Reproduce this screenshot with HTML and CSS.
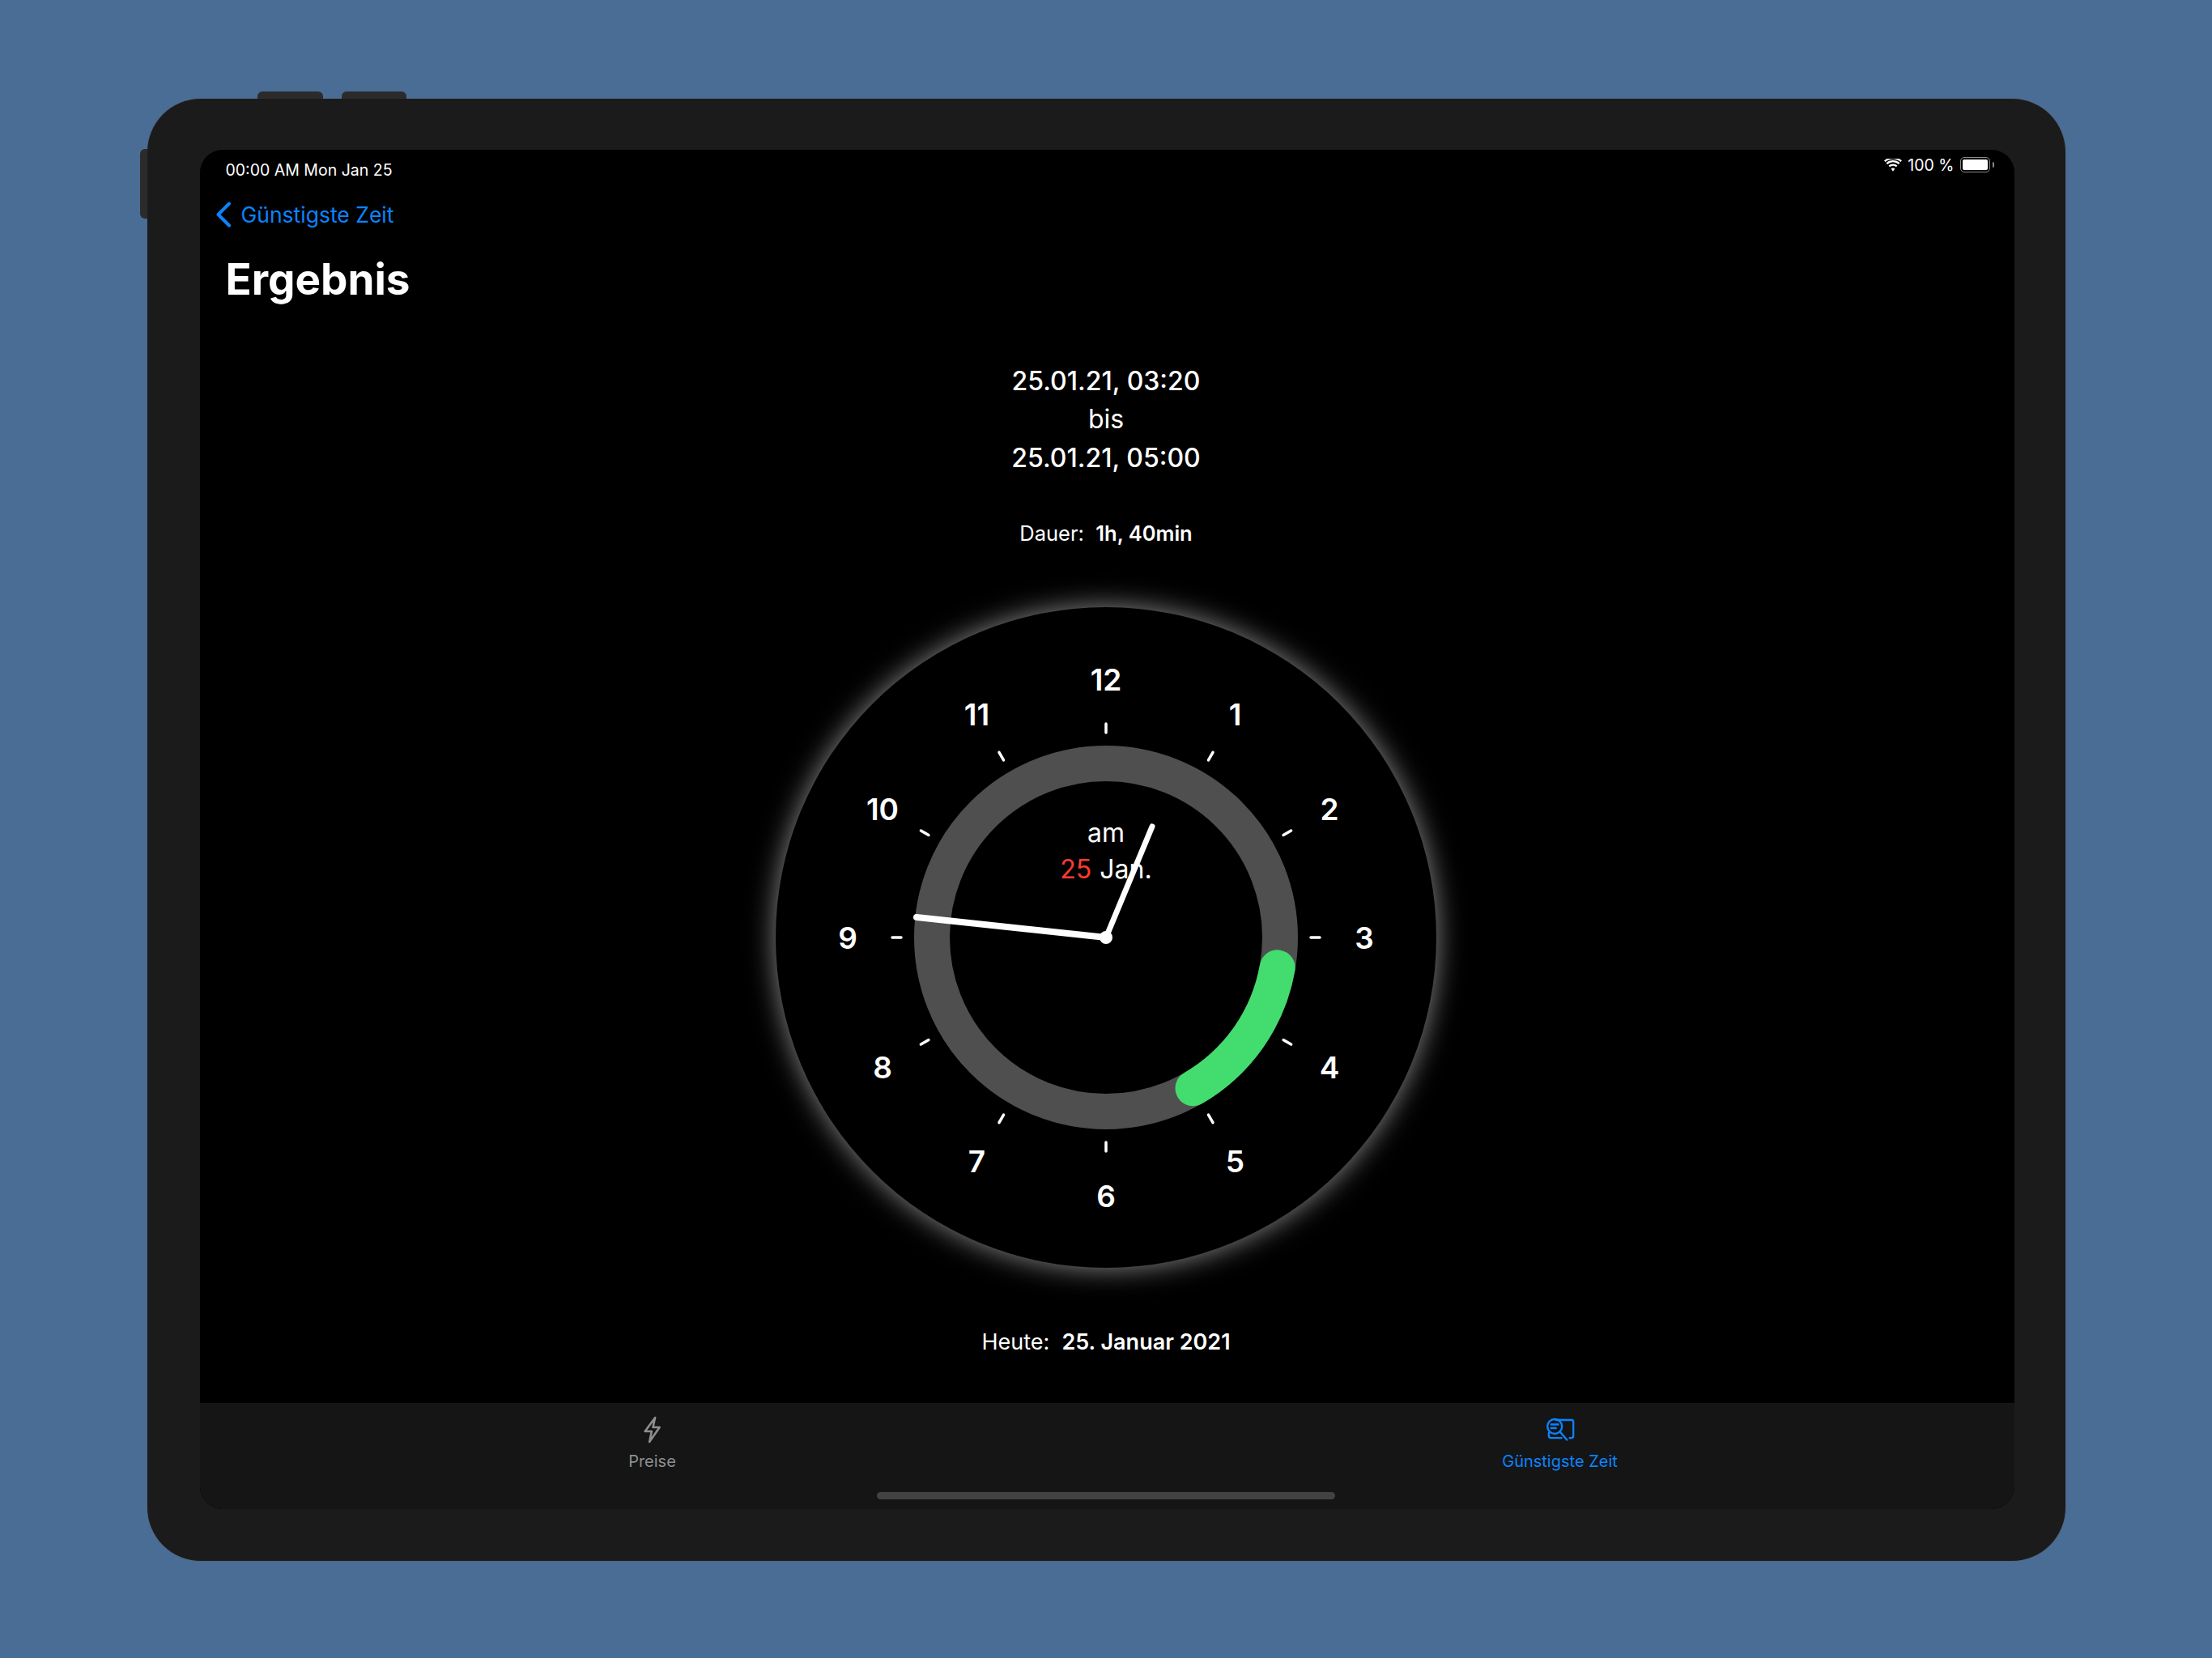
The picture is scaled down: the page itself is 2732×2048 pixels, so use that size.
FILE: index.html
```html
<!DOCTYPE html>
<html lang="de">
<head>
    <meta charset="UTF-8">
    <meta name="viewport" content="width=device-width, initial-scale=1.0">
    <title>Ergebnis</title>
    <link rel="stylesheet" href="styles.css">
</head>
<body>
    <div class="device">
        <div class="hw-btn hw-top-a"></div>
        <div class="hw-btn hw-top-b"></div>
        <div class="hw-btn hw-side"></div>

        <div class="screen">
            <div class="status-bar">
                <span>00:00 AM Mon Jan 25</span>
                <div class="status-right">
                    <svg class="wifi" width="22" height="16" viewBox="0 0 22 16">
                        <path d="M11 11.400a3 3 0 0 1 2.300 1.100L11 15.800l-2.300-3.300A3 3 0 0 1 11 11.400z" fill="#fff"/>
                        <path d="M6.300 9.400a7 7 0 0 1 9.400 0M3.300 6.100a11.300 11.300 0 0 1 15.400 0M.8 3.300a15.200 15.200 0 0 1 20.400 0" fill="none" stroke="#fff" stroke-width="2.200"/>
                    </svg>
                    <span>100 %</span>
                    <div class="battery"><div class="battery-fill"></div></div>
                </div>
            </div>

            <a class="back-link">
                <svg width="20" height="32" viewBox="0 0 20 32">
                    <path d="M17 2.500 3.500 16 17 29.500" fill="none" stroke="#0a84ff" stroke-width="4" stroke-linecap="round" stroke-linejoin="round"/>
                </svg>
                <span>Günstigste Zeit</span>
            </a>

            <h1 class="title">Ergebnis</h1>

            <div class="content">
                <div class="range">
                    <div class="range-date">25.01.21, 03:20</div>
                    <div class="range-bis">bis</div>
                    <div class="range-date">25.01.21, 05:00</div>
                </div>
                <div class="info-line dauer">Dauer:&nbsp; <b>1h, 40min</b></div>

                <div class="clock-face">
                    <svg class="clock" width="816" height="816" viewBox="-408 -408 816 816">
                        <circle r="215" fill="none" stroke="#4f4f4f" stroke-width="44"/>
                        <!-- 03:20 bis 05:00, 100deg bis 150deg -->
                        <path d="M211.700 37.300A215 215 0 0 1 107.500 186.200" fill="none" stroke="#43dc6e" stroke-width="44" stroke-linecap="round"/>

                        <g stroke="#fff" stroke-width="3.500" stroke-linecap="round">
                            <line y1="-253" y2="-264"/>
                            <line y1="-253" y2="-264" transform="rotate(30)"/>
                            <line y1="-253" y2="-264" transform="rotate(60)"/>
                            <line y1="-253" y2="-264" transform="rotate(90)"/>
                            <line y1="-253" y2="-264" transform="rotate(120)"/>
                            <line y1="-253" y2="-264" transform="rotate(150)"/>
                            <line y1="-253" y2="-264" transform="rotate(180)"/>
                            <line y1="-253" y2="-264" transform="rotate(210)"/>
                            <line y1="-253" y2="-264" transform="rotate(240)"/>
                            <line y1="-253" y2="-264" transform="rotate(270)"/>
                            <line y1="-253" y2="-264" transform="rotate(300)"/>
                            <line y1="-253" y2="-264" transform="rotate(330)"/>
                        </g>

                        <g class="hours">
                            <text x="0" y="-319">12</text>
                            <text x="159.500" y="-276">1</text>
                            <text x="276" y="-159.500">2</text>
                            <text x="319" y="0">3</text>
                            <text x="276" y="159.500">4</text>
                            <text x="159.500" y="276">5</text>
                            <text x="0" y="319">6</text>
                            <text x="-159.500" y="276">7</text>
                            <text x="-276" y="159.500">8</text>
                            <text x="-319" y="0">9</text>
                            <text x="-276" y="-159.500">10</text>
                            <text x="-159.500" y="-276">11</text>
                        </g>

                        <text class="clock-label" x="0" y="-118">am</text>
                        <text class="clock-label" x="0" y="-73"><tspan class="day">25</tspan><tspan dx="10">Jan.</tspan></text>

                        <line x1="0" y1="0" x2="57" y2="-137" stroke="#fff" stroke-width="7" stroke-linecap="round"/>
                        <line x1="0" y1="0" x2="-234" y2="-25" stroke="#fff" stroke-width="8" stroke-linecap="round"/>
                        <circle r="8" fill="#fff"/>
                    </svg>
                </div>

                <div class="info-line heute">Heute:&nbsp; <b>25. Januar 2021</b></div>
            </div>

            <div class="tab-bar">
                <div class="tab">
                    <svg width="24" height="34" viewBox="0 0 24 34">
                        <path d="M15.500 2 3 19h8.200L8.500 32 21 14h-8.200z" fill="none" stroke="#8e8e8e" stroke-width="2.600" stroke-linejoin="round"/>
                    </svg>
                    <span>Preise</span>
                </div>
                <div class="tab tab-active">
                    <svg width="36" height="34" viewBox="0 -3 36 34">
                        <g fill="none" stroke="#0a84ff" stroke-width="2.400" stroke-linecap="round">
                            <path d="M13 2h19a2.600 2.600 0 0 1 2.600 2.600v17a2.600 2.600 0 0 1-2.600 2.600h-2"/>
                            <path d="M4.200 18v3.500a2.600 2.600 0 0 0 2.600 2.600h13"/>
                            <circle cx="11.500" cy="10" r="9"/>
                            <path d="M18 16.500 26.500 26.500"/>
                            <path d="M7 7.500h9M7 12h6"/>
                        </g>
                    </svg>
                    <span>Günstigste Zeit</span>
                </div>
                <div class="home-indicator"></div>
            </div>
        </div>
    </div>
</body>
</html>
```

FILE: styles.css
```css
body {
    margin: 0;
    height: 2048px;
    display: flex;
    align-items: flex-start;
    justify-content: center;
    background-color: #4a6d96;
    font-family: Inter, "Liberation Sans", sans-serif;
    color: #ffffff;
}

.device {
    position: relative;
    width: 2369px;
    height: 1806px;
    margin-top: 122px;
    padding: 63px 63px 64px 65px;
    box-sizing: border-box;
    background-color: #1b1b1b;
    border-radius: 66px;
    box-shadow: 0 0 0 1px rgba(90, 90, 90, 0.35);
}

.hw-btn {
    position: absolute;
    background-color: #2b2b2b;
}

.hw-top-a, .hw-top-b {
    top: -9px;
    height: 9px;
    border-radius: 6px 6px 0 0;
}

.hw-top-a {
    left: 136px;
    width: 81px;
}

.hw-top-b {
    left: 240px;
    width: 80px;
}

.hw-side {
    left: -9px;
    top: 62px;
    width: 9px;
    height: 86px;
    border-radius: 6px 0 0 6px;
}

.screen {
    height: 100%;
    display: flex;
    flex-direction: column;
    background-color: #000000;
    border-radius: 28px;
    overflow: hidden;
}

.status-bar {
    display: flex;
    justify-content: space-between;
    padding: 13px 30px 0 32px;
    height: 33px;
    font-size: 19.500px;
    line-height: 24px;
}

.status-right {
    display: flex;
    align-items: flex-start;
    gap: 7px;
    margin-top: -6px;
}

.wifi {
    margin-top: 4px;
}

.battery {
    position: relative;
    width: 37px;
    height: 19px;
    margin-top: 2px;
    padding: 2px;
    border: 1.500px solid #8a8a8a;
    border-radius: 5px;
    box-sizing: border-box;
}

.battery-fill {
    height: 100%;
    background-color: #ffffff;
    border-radius: 2px;
}

.battery::after {
    content: "";
    position: absolute;
    right: -6px;
    top: 4.500px;
    width: 2px;
    height: 7px;
    background-color: #8a8a8a;
    border-radius: 0 2px 2px 0;
}

.back-link {
    display: flex;
    align-items: center;
    gap: 12px;
    padding-left: 19px;
    margin-top: 18px;
    height: 32px;
    color: #0a84ff;
    font-size: 26.500px;
}

.title {
    margin: 30px 0 0 32px;
    height: 68px;
    font-size: 53px;
    line-height: 68px;
    font-weight: 700;
}

.content {
    flex: 1;
    display: flex;
    flex-direction: column;
    align-items: center;
    padding-right: 2px;
}

.range {
    margin-top: 67.500px;
    text-align: center;
    font-size: 32px;
    line-height: 47.500px;
}

.range-date {
    font-weight: 500;
}

.info-line {
    line-height: 36px;
}

.info-line b {
    font-weight: 600;
}

.dauer {
    margin-top: 51.500px;
    font-size: 25.500px;
}

.clock-face {
    width: 816px;
    height: 816px;
    margin-top: 73px;
    background-color: #000000;
    border-radius: 50%;
    box-shadow: 0 0 34px rgba(255, 255, 255, 0.55);
}

.clock {
    display: block;
}

.hours {
    transform: translateY(0.500px);
}

.hours text {
    fill: #ffffff;
    font-size: 37px;
    font-weight: 600;
    text-anchor: middle;
    dominant-baseline: central;
}

.clock-label {
    fill: #ffffff;
    font-size: 32px;
    text-anchor: middle;
}

.day {
    fill: #ff3b30;
}

.heute {
    margin-top: 74px;
    font-size: 27px;
}

.tab-bar {
    position: relative;
    display: flex;
    height: 131px;
    background-color: #151515;
}

.tab {
    position: absolute;
    top: 16px;
    display: flex;
    flex-direction: column;
    align-items: center;
    gap: 9px;
    color: #8e8e8e;
    font-size: 20px;
    line-height: 26px;
    transform: translateX(-50%);
}

.tab:first-child {
    left: 559px;
}

.tab-active {
    left: 1680px;
    color: #0a84ff;
}

.home-indicator {
    position: absolute;
    left: 836px;
    right: 839px;
    bottom: 12px;
    height: 9px;
    background-color: #424242;
    border-radius: 4.500px;
}
```
